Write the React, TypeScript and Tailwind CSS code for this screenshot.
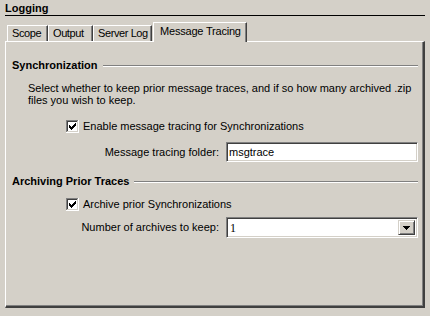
import React from 'react'

const sunken =
  'border border-t-[#808080] border-l-[#808080] border-b-white border-r-white shadow-[inset_1px_1px_0_#404040,inset_-1px_-1px_0_#d4d0c8]'

function CheckBox() {
  // classic 13x13 sunken checkbox with a pixel check mark
  const check: [number, number, number][] = [
    [3, 5, 3],
    [4, 6, 3],
    [5, 7, 3],
    [6, 6, 3],
    [7, 5, 3],
    [8, 4, 3],
    [9, 3, 3],
  ]
  return (
    <svg width="13" height="13" viewBox="0 0 13 13" shapeRendering="crispEdges" className="shrink-0">
      <rect x="0" y="0" width="13" height="13" fill="#ffffff" />
      <rect x="0" y="0" width="12" height="1" fill="#808080" />
      <rect x="0" y="0" width="1" height="12" fill="#808080" />
      <rect x="1" y="1" width="10" height="1" fill="#404040" />
      <rect x="1" y="1" width="1" height="10" fill="#404040" />
      <rect x="1" y="11" width="11" height="1" fill="#d4d0c8" />
      <rect x="11" y="1" width="1" height="11" fill="#d4d0c8" />
      {check.map(([x, y, h]) => (
        <rect key={x} x={x} y={y} width="1" height={h} fill="#000" />
      ))}
    </svg>
  )
}

function GroupHeading({ title }: { title: string }) {
  return (
    <div className="flex items-center h-[13px] leading-[13px]">
      <span className="font-bold whitespace-nowrap">{title}</span>
      <div className="ml-[5px] flex-1 h-px bg-[#808080] shadow-[0_1px_0_#ffffff]" />
    </div>
  )
}

function Tab({ label, width, active }: { label: string; width: string; active?: boolean }) {
  if (active) {
    return (
      <div
        className={`relative z-10 ml-px -mb-px h-[20px] ${width} bg-[#d4d0c8] border-t border-l border-r border-t-white border-l-white border-r-[#404040] shadow-[inset_-1px_0_0_#808080] pl-[6px] pt-[2px] leading-[13px] tracking-[-0.2px] whitespace-nowrap`}
      >
        {label}
      </div>
    )
  }
  return (
    <div
      className={`h-[16px] ${width} border-t border-l border-r border-t-white border-l-white border-r-[#404040] shadow-[inset_-1px_0_0_#808080] pl-[4px] pt-px leading-[13px] tracking-[-0.4px] whitespace-nowrap`}
    >
      {label}
    </div>
  )
}

export default function App() {
  return (
    <div className="w-[430px] h-[316px] bg-[#d4d0c8] px-[5px] pt-[2px] text-[11px] text-black font-['Liberation_Sans',Arial,sans-serif] overflow-hidden">
      {/* Page title */}
      <div className="font-bold leading-[13px] border-b border-black">Logging</div>

      {/* Tab strip */}
      <div className="flex items-end h-[19px] mt-[6px] ml-[2px]">
        <Tab label="Scope" width="w-[41px]" />
        <Tab label="Output" width="w-[45px]" />
        <Tab label="Server Log" width="w-[59px]" />
        <Tab label="Message Tracing" width="w-[94px]" active />
      </div>

      {/* Tab page */}
      <div className="w-[420px] h-[267px] border-t border-l border-r-2 border-b-2 border-t-white border-l-white border-r-[#404040] border-b-[#404040] shadow-[inset_-1px_-1px_0_#808080]">
        <div className="pt-[17px] pl-[6px] pr-[5px]">
          <GroupHeading title="Synchronization" />

          <p className="mt-[10px] pl-[16px] leading-[12px]">
            Select whether to keep prior message traces, and if so how many archived .zip
            <br />
            files you wish to keep.
          </p>

          <label className="mt-[14px] ml-[54px] flex items-center gap-[4px] h-[13px] leading-[13px]">
            <CheckBox />
            <span>Enable message tracing for Synchronizations</span>
          </label>

          <div className="mt-[9px] flex items-center">
            <span className="w-[208px] pr-[1px] text-right">Message tracing folder:</span>
            <div className={`ml-[6px] flex-1 h-[20px] bg-white ${sunken} flex items-center pl-[2px]`}>
              msgtrace
            </div>
          </div>

          <div className="mt-[13px]">
            <GroupHeading title="Archiving Prior Traces" />
          </div>

          <label className="mt-[10px] ml-[54px] flex items-center gap-[4px] h-[13px] leading-[13px]">
            <CheckBox />
            <span>Archive prior Synchronizations</span>
          </label>

          <div className="mt-[6px] flex items-center">
            <span className="w-[208px] pr-[1px] text-right">Number of archives to keep:</span>
            <div className={`ml-[6px] flex-1 h-[21px] bg-white ${sunken} flex items-stretch p-[2px]`}>
              <span className="flex-1 flex items-center pl-px text-[12px] font-['Liberation_Serif',serif]">1</span>
              <div className="w-[17px] bg-[#d4d0c8] border border-t-[#d4d0c8] border-l-[#d4d0c8] border-b-[#404040] border-r-[#404040] shadow-[inset_1px_1px_0_#ffffff,inset_-1px_-1px_0_#808080] flex items-center justify-center">
                <svg width="7" height="4" viewBox="0 0 7 4" shapeRendering="crispEdges">
                  <path d="M0 0h7v1H0zM1 1h5v1H1zM2 2h3v1H2zM3 3h1v1H3z" fill="#000" />
                </svg>
              </div>
            </div>
          </div>
        </div>
      </div>
    </div>
  )
}
